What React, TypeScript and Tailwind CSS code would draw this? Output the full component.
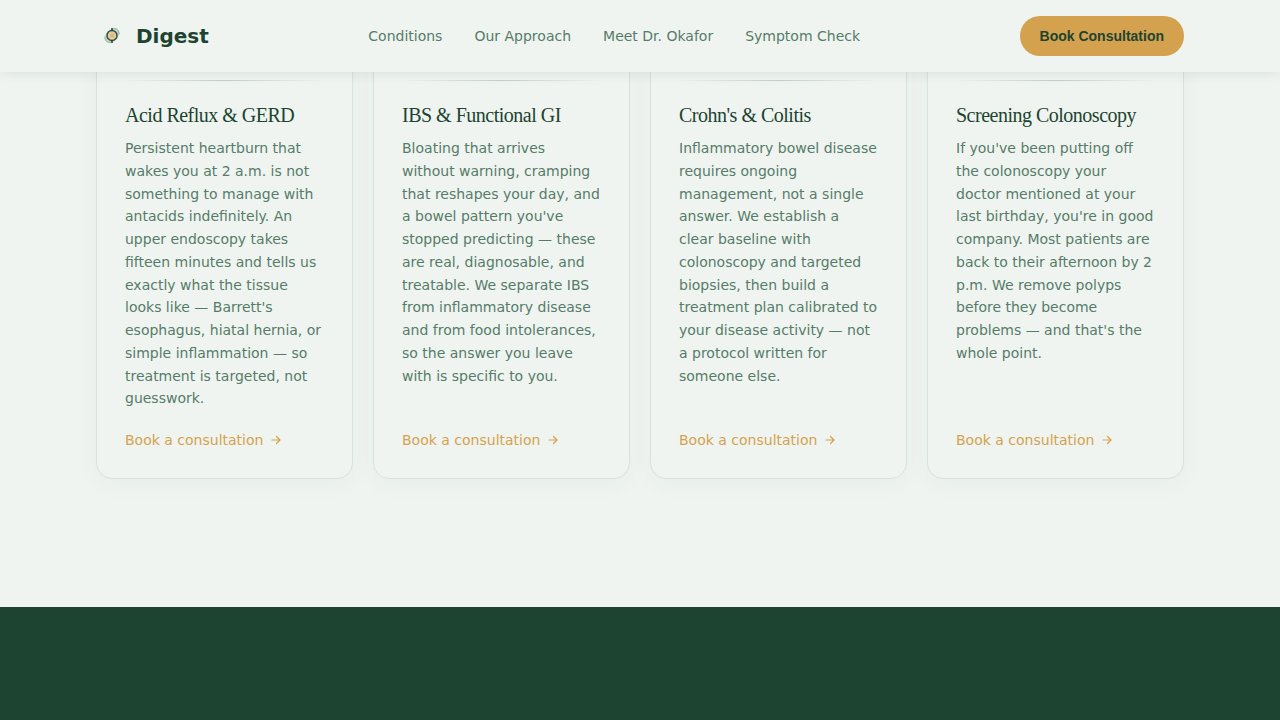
import React from "react";

const navItems = ["Conditions", "Our Approach", "Meet Dr. Okafor", "Symptom Check"];

const conditions = [
  {
    title: "Acid Reflux & GERD",
    text: "Persistent heartburn that wakes you at 2 a.m. is not something to manage with antacids indefinitely. An upper endoscopy takes fifteen minutes and tells us exactly what the tissue looks like — Barrett's esophagus, hiatal hernia, or simple inflammation — so treatment is targeted, not guesswork.",
  },
  {
    title: "IBS & Functional GI",
    text: "Bloating that arrives without warning, cramping that reshapes your day, and a bowel pattern you've stopped predicting — these are real, diagnosable, and treatable. We separate IBS from inflammatory disease and from food intolerances, so the answer you leave with is specific to you.",
  },
  {
    title: "Crohn's & Colitis",
    text: "Inflammatory bowel disease requires ongoing management, not a single answer. We establish a clear baseline with colonoscopy and targeted biopsies, then build a treatment plan calibrated to your disease activity — not a protocol written for someone else.",
  },
  {
    title: "Screening Colonoscopy",
    text: "If you've been putting off the colonoscopy your doctor mentioned at your last birthday, you're in good company. Most patients are back to their afternoon by 2 p.m. We remove polyps before they become problems — and that's the whole point.",
  },
];

const Logo = () => (
  <svg className="size-8" viewBox="0 0 32 32" fill="none" aria-hidden="true">
    <ellipse cx="16" cy="15.500" rx="8" ry="6" transform="rotate(-45 16 15.500)" fill="#c3d6c8" />
    <path d="M17 8.500c4-.5 6.500 2 6 6M15 22.500c-4 .5-6.500-2-6-6" stroke="#8fb39b" strokeWidth="1" />
    <circle cx="16" cy="15.500" r="5" fill="#e6cb9c" stroke="#2d5a45" strokeWidth="1.500" />
    <path d="M16 8v3M16 20v3" stroke="#1d4431" strokeWidth="1.500" />
    <circle cx="16" cy="15.500" r="2" fill="#e0b47c" />
  </svg>
);

const Arrow = () => (
  <svg className="size-3.5" viewBox="0 0 14 14" fill="none" stroke="currentColor" strokeWidth="1.200" strokeLinecap="round" strokeLinejoin="round" aria-hidden="true">
    <path d="M3 7h8M7.500 3.500L11 7l-3.500 3.500" />
  </svg>
);

const Header = () => (
  <header className="sticky top-0 z-10 bg-[#eff4f0] shadow-[0_1px_12px_rgba(29,68,49,0.1)]">
    <div className="mx-auto flex h-18 max-w-[1088px] items-center justify-between">
      <a href="#" className="flex items-center gap-2">
        <Logo />
        <span className="text-xl font-bold text-[#1d4431]">Digest</span>
      </a>
      <nav className="flex gap-8 text-sm text-[#567c69]">
        {navItems.map((item) => (
          <a key={item} href="#">
            {item}
          </a>
        ))}
      </nav>
      <button className="h-10 rounded-full bg-[#d4a24e] px-5 font-['Liberation_Sans',sans-serif] text-sm font-bold text-[#1d4431]">
        Book Consultation
      </button>
    </div>
  </header>
);

const Card = ({ title, text }: { title: string; text: string }) => (
  <article className="flex flex-col rounded-2xl border border-[#d9e2dc] bg-[#eff4f0] px-7 pt-12 pb-7 shadow-[0_4px_24px_rgba(29,68,49,0.04)]">
    <div className="h-px bg-linear-to-r from-transparent via-[#c3d1c8] to-transparent" />
    <h3 className="mt-5 font-['Liberation_Serif',serif] text-xl leading-7 tracking-tight text-[#1d4431]">{title}</h3>
    <p className="mt-2 text-sm leading-relaxed text-[#567c69]">{text}</p>
    <div className="mt-auto pt-5">
      <a href="#" className="flex items-center gap-1.5 text-sm leading-5 text-[#d4a24e]">
        Book a consultation
        <Arrow />
      </a>
    </div>
  </article>
);

export default function App() {
  return (
    <div className="flex min-h-screen flex-col bg-[#eff4f0] font-['DejaVu_Sans',sans-serif]">
      <Header />
      <section className="px-24 pb-32">
        <div className="mx-auto -mt-[41px] grid max-w-[1088px] grid-cols-4 gap-5">
          {conditions.map((c) => (
            <Card key={c.title} title={c.title} text={c.text} />
          ))}
        </div>
      </section>
      <section className="flex-1 bg-[#1d4431]" />
    </div>
  );
}
